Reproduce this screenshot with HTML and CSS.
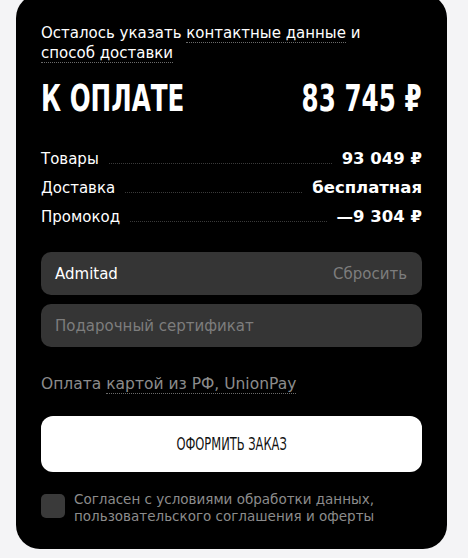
FILE: index.html
```html
<!DOCTYPE html>
<html lang="ru">
<head>
    <meta charset="UTF-8">
    <title>Оформление заказа</title>
    <link rel="stylesheet" href="styles.css">
</head>
<body>
<div class="card">
    <p class="note">Осталось указать <span class="dots">контактные данные</span> и <span class="dots">способ доставки</span></p>

    <div class="total">
        <span class="big">К ОПЛАТЕ</span>
        <span class="big big-r">83 745 ₽</span>
    </div>

    <ul class="sum">
        <li><span class="lbl">Товары</span><i class="lead"></i><b>93 049 ₽</b></li>
        <li><span class="lbl">Доставка</span><i class="lead"></i><b>бесплатная</b></li>
        <li><span class="lbl">Промокод</span><i class="lead"></i><b>—9 304 ₽</b></li>
    </ul>

    <div class="field">
        <span class="val">Admitad</span>
        <span class="reset">Сбросить</span>
    </div>
    <div class="field">
        <span class="ph">Подарочный сертификат</span>
    </div>

    <p class="pay">Оплата <span class="dots">картой из РФ, UnionPay</span></p>

    <button class="order"><span class="order-txt">ОФОРМИТЬ ЗАКАЗ</span></button>

    <label class="agree">
        <span class="box"></span>
        <span class="agree-txt">Согласен с условиями обработки данных, пользовательского соглашения и оферты</span>
    </label>
</div>
</body>
</html>
```

FILE: styles.css
```css
*{ margin:0; padding:0; box-sizing:border-box;}
body{
    background:#f4f4f6;
    font-family:"DejaVu Sans", sans-serif;
    color:#fff;
}
.card{
    width:431px;
    margin:-6px 0 0 16px;
    background:#000;
    border-radius:24px;
    padding:29px 25px 24px;
}
.note{
    max-width:335px;
    font-size:15px;
    line-height:20px;
}
.dots{
    border-bottom:1px dotted #6a6a6a;
}
.total{
    display:flex;
    justify-content:space-between;
    align-items:center;
    margin-top:15px;
    height:40px;
}
/* condensed headline: no narrow face installed, squeeze it */
.big{
    display:inline-block;
    font-family:"DejaVu Sans Condensed", "DejaVu Sans", sans-serif;
    font-weight:bold;
    font-size:38px;
    line-height:40px;
    transform:scaleX(0.72);
    transform-origin:left center;
}
.big-r{ transform-origin:right center;}
.sum{
    list-style:none;
    margin-top:26px;
}
.sum li{
    display:flex;
    align-items:baseline;
    height:29px;
    line-height:29px;
    font-size:15px;
}
.lead{
    flex:1;
    border-bottom:1px dotted #3a3a3a;
    margin:0 10px;
}
.sum b{
    font-size:16.5px;
    font-weight:bold;
}
.field{
    display:flex;
    justify-content:space-between;
    align-items:center;
    height:43px;
    background:#353535;
    border-radius:10px;
    padding:0 15px 0 14px;
    font-size:15px;
    margin-top:9px;
}
.sum + .field{ margin-top:21px;}
.reset,.ph{ color:#7d7d7d;}
.pay{
    margin-top:28px;
    font-size:15.5px;
    color:#8c8c8c;
}
.order{
    display:block;
    width:100%;
    height:56px;
    margin-top:23px;
    border:0;
    border-radius:12px;
    background:#fff;
    color:#111;
}
.order-txt{
    display:inline-block;
    font-family:"DejaVu Sans Condensed", "DejaVu Sans", sans-serif;
    font-size:17px;
    transform:scaleX(0.75);
}
.agree{
    display:flex;
    gap:9px;
    margin-top:22px;
}
.box{
    flex:none;
    width:24px;
    height:24px;
    border-radius:5px;
    background:#3a3a3a;
}
.agree-txt{
    font-size:13.5px;
    line-height:17px;
    color:#8c8c8c;
    margin-top:-3px;
}
```
